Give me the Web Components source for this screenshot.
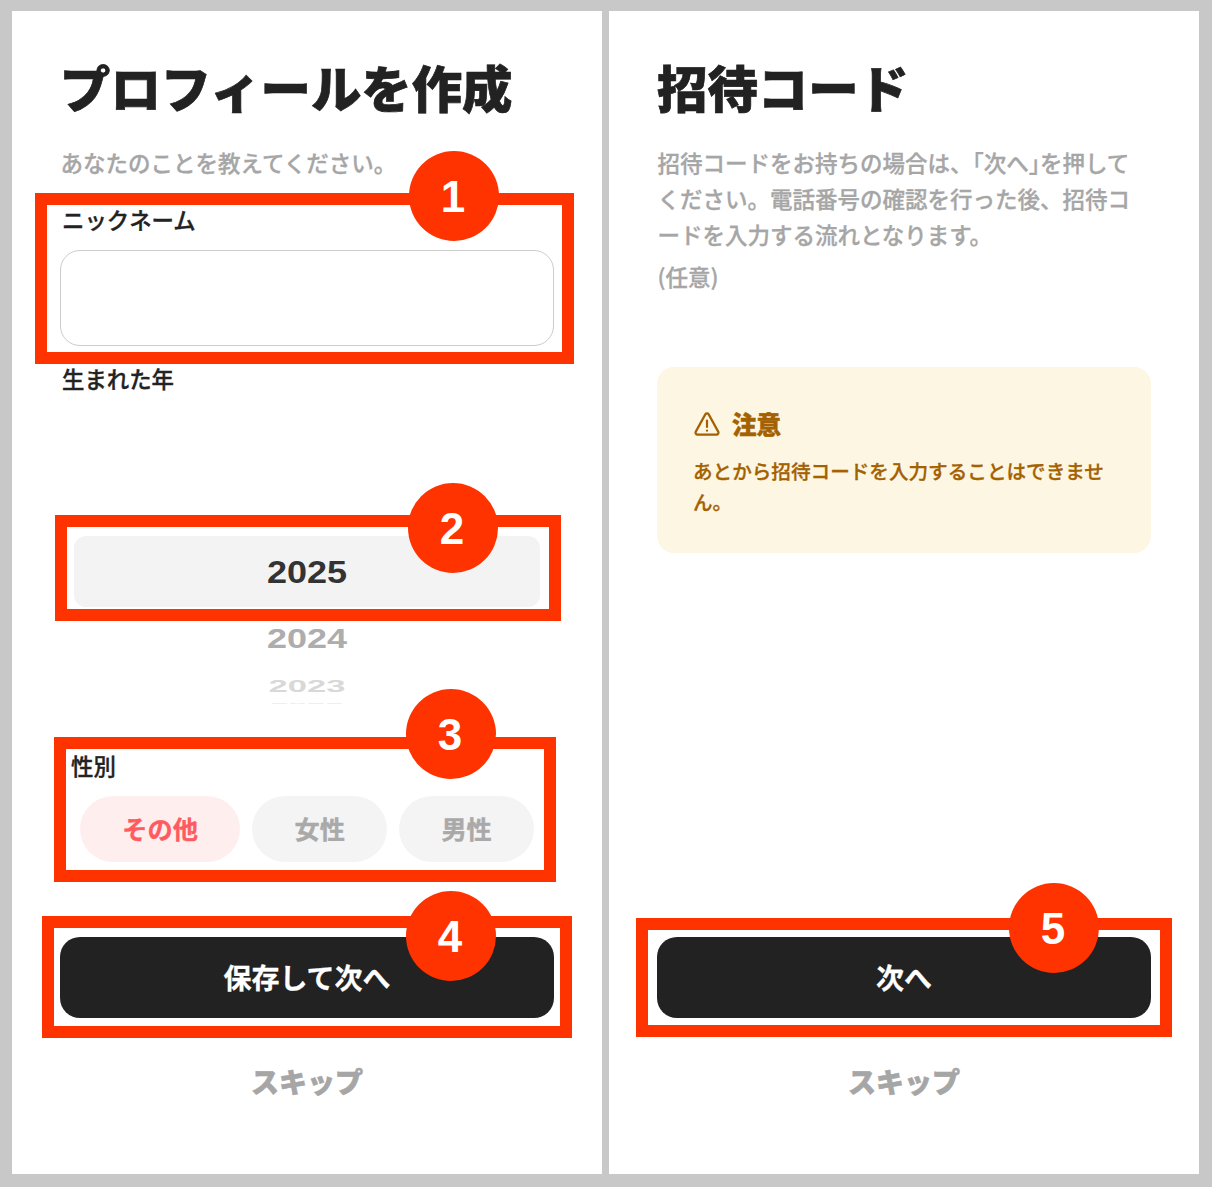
<!DOCTYPE html>
<html lang="ja">
<head>
<meta charset="utf-8">
<title>Onboarding</title>
<style>
    html, body { margin: 0; padding: 0; background: #c8c8c8; }
    body {
        font-family: "Noto Sans CJK JP", "Noto Sans", sans-serif;
        color: #222;
    }
</style>
</head>
<body>
<mock-board>
    <phone-screen heading="プロフィールを作成" action="保存して次へ">
        <screen-text>あなたのことを教えてください。</screen-text>
        <field-label style="margin-top:24px">ニックネーム</field-label>
        <text-box></text-box>
        <field-label style="margin-top:17px">生まれた年</field-label>
        <year-wheel></year-wheel>
        <field-label style="margin:45px 0 0 9px">性別</field-label>
        <gender-chips></gender-chips>
    </phone-screen>

    <phone-screen heading="招待コード" action="次へ">
        <screen-text>招待コードをお持ちの場合は、「次へ<span style="letter-spacing:-.5em">」</span>を押して<br>ください。電話番号の確認を行った後、招待コ<br>ードを入力する流れとなります。</screen-text>
        <screen-text class="optional">(任意)</screen-text>
        <notice-card heading="注意">あとから招待コードを入力することはできませ<br>ん。</notice-card>
    </phone-screen>

    <call-out n="1" box="35,193,539,171" dot="454,196"></call-out>
    <call-out n="2" box="55,515,506,106" dot="453,528"></call-out>
    <call-out n="3" box="54,737,502,145" dot="451,734"></call-out>
    <call-out n="4" box="42,916,530,122" dot="451,936"></call-out>
    <call-out n="5" box="636,918,536,119" dot="1054,928"></call-out>
</mock-board>

<script>
class MockBoard extends HTMLElement {
    constructor() {
        super();
        this.attachShadow({ mode: "open" });
        this.shadowRoot.innerHTML = `
            <style>
                :host {
                    display: grid;
                    position: relative;
                    grid-template-columns: 590px 590px;
                    column-gap: 7px;
                    box-sizing: border-box;
                    width: 1212px;
                    height: 1187px;
                    padding: 11px 13px 13px 12px;
                    overflow: hidden;
                }
            </style>
            <slot></slot>
        `;
    }
}

class PhoneScreen extends HTMLElement {
    constructor() {
        super();
        this.attachShadow({ mode: "open" });
    }

    connectedCallback() {
        this.shadowRoot.innerHTML = `
            <style>
                :host {
                    display: flex;
                    flex-direction: column;
                    box-sizing: border-box;
                    padding: 46px 48px 73.5px;
                    background: #fff;
                    min-width: 0;
                }
                h1 {
                    margin: 0 0 27px;
                    font-size: 50.4px;
                    line-height: 60px;
                    font-weight: 900;
                    color: #222;
                    white-space: nowrap;
                    -webkit-text-stroke: .7px #222;
                }
                .content { display: flex; flex-direction: column; flex: 1; }
                button {
                    display: block;
                    width: 100%;
                    height: 81px;
                    margin: 0;
                    padding: 0 0 2px;
                    border: 0;
                    border-radius: 20px;
                    background: #222;
                    color: #fff;
                    font: 700 28px/1 "Noto Sans CJK JP", sans-serif;
                    -webkit-text-stroke: .3px #fff;
                }
                .skip {
                    margin-top: 42.5px;
                    text-align: center;
                    font-size: 28px;
                    line-height: 40px;
                    font-weight: 900;
                    color: #a6a6a6;
                    -webkit-text-stroke: .6px #a6a6a6;
                }
            </style>
            <h1>${this.getAttribute("heading")}</h1>
            <div class="content"><slot></slot></div>
            <button type="button">${this.getAttribute("action")}</button>
            <div class="skip">スキップ</div>
        `;
    }
}

class ScreenText extends HTMLElement {
    constructor() {
        super();
        this.attachShadow({ mode: "open" });
        this.shadowRoot.innerHTML = `
            <style>
                :host {
                    display: block;
                    padding-left: .5px;
                    font-size: 22.5px;
                    line-height: 36px;
                    font-weight: 500;
                    color: #a6a6a6;
                    white-space: nowrap;
                    -webkit-text-stroke: .3px #a6a6a6;
                }
                :host(.optional) { margin-top: 6px; }
            </style>
            <slot></slot>
        `;
    }
}

class FieldLabel extends HTMLElement {
    constructor() {
        super();
        this.attachShadow({ mode: "open" });
        this.shadowRoot.innerHTML = `
            <style>
                :host {
                    display: block;
                    padding-left: 2px;
                    font-size: 22.4px;
                    line-height: 30px;
                    font-weight: 500;
                    color: #222;
                    -webkit-text-stroke: .35px #222;
                }
            </style>
            <slot></slot>
        `;
    }
}

class TextBox extends HTMLElement {
    constructor() {
        super();
        this.attachShadow({ mode: "open" });
        this.shadowRoot.innerHTML = `
            <style>
                :host { display: block; margin-top: 16px; }
                input {
                    display: block;
                    box-sizing: border-box;
                    width: 100%;
                    height: 96px;
                    border: 1px solid #ccc;
                    border-radius: 20px;
                    background: #fff;
                    outline: none;
                }
            </style>
            <input type="text" aria-label="ニックネーム">
        `;
    }
}

class YearWheel extends HTMLElement {
    constructor() {
        super();
        this.attachShadow({ mode: "open" });
        this.shadowRoot.innerHTML = `
            <style>
                :host {
                    display: block;
                    height: 312px;
                    box-sizing: border-box;
                    padding: 143px 14px 0;
                }
                div {
                    display: flex;
                    align-items: center;
                    justify-content: center;
                    font: 700 36px/1 "Liberation Sans", sans-serif;
                }
                span { display: block; }
                .current {
                    height: 71px;
                    border-radius: 12px;
                    background: #f3f3f3;
                    color: #333;
                }
                .current span { transform: scaleY(.89); }
                .near { height: 62px; color: #adadad; }
                .near span { transform: translateY(1px) scaleY(.78); }
                .far { height: 30px; color: #d8d8d8; }
                .far span { transform: translateY(2px) scale(.96, .46); }
                .farther { height: 8px; color: #ececec; }
                .farther span { transform: scale(.92, .07); }
            </style>
            <div class="current"><span>2025</span></div>
            <div class="near"><span>2024</span></div>
            <div class="far"><span>2023</span></div>
            <div class="farther"><span>2022</span></div>
        `;
    }
}

class GenderChips extends HTMLElement {
    constructor() {
        super();
        this.attachShadow({ mode: "open" });
        this.shadowRoot.innerHTML = `
            <style>
                :host {
                    display: flex;
                    gap: 12px;
                    margin: 16px 0 0 20px;
                }
                span {
                    display: flex;
                    align-items: center;
                    box-sizing: border-box;
                    height: 66px;
                    padding: 0 42.3px 2px;
                    border-radius: 33px;
                    background: #f4f4f4;
                    color: #a9a9a9;
                    font-size: 25.2px;
                    font-weight: 700;
                    white-space: nowrap;
                    -webkit-text-stroke: .4px currentColor;
                }
                .on { background: #ffeeee; color: #ff5a5f; }
            </style>
            <span class="on">その他</span>
            <span>女性</span>
            <span>男性</span>
        `;
    }
}

class NoticeCard extends HTMLElement {
    constructor() {
        super();
        this.attachShadow({ mode: "open" });
    }

    connectedCallback() {
        this.shadowRoot.innerHTML = `
            <style>
                :host {
                    display: block;
                    box-sizing: border-box;
                    height: 186px;
                    margin-top: 73px;
                    padding: 39px 36px 0;
                    border-radius: 17px;
                    background: #fdf6e3;
                    color: #a36100;
                }
                .head {
                    display: flex;
                    align-items: center;
                    gap: 12px;
                    height: 34px;
                    font-size: 24.5px;
                    font-weight: 900;
                }
                .head span { -webkit-text-stroke: .5px #a36100; }
                svg { display: block; width: 26px; height: 26px; flex: none; margin: 2px 0 0 1px; }
                .body {
                    margin-top: 15px;
                    font-size: 19.6px;
                    line-height: 31px;
                    font-weight: 500;
                    white-space: nowrap;
                    -webkit-text-stroke: .3px #a36100;
                }
            </style>
            <div class="head">
                <svg viewBox="0 0 26 26" fill="none" stroke="currentColor" stroke-width="2.2" stroke-linecap="round" stroke-linejoin="round">
                    <path d="M11.3 3.4 1.8 20.6A2 2 0 0 0 3.5 23.6h19a2 2 0 0 0 1.7-3L14.7 3.4a2 2 0 0 0-3.4 0Z"/>
                    <path d="M13 9.5v6.5"/>
                    <path d="M13 19.6v.1"/>
                </svg>
                <span>${this.getAttribute("heading")}</span>
            </div>
            <div class="body"><slot></slot></div>
        `;
    }
}

// annotation drawn over the screenshot: a frame and its numbered dot, in page coordinates
class CallOut extends HTMLElement {
    constructor() {
        super();
        this.attachShadow({ mode: "open" });
    }

    connectedCallback() {
        const [x, y, w, h] = this.getAttribute("box").split(",").map(Number);
        const [cx, cy] = this.getAttribute("dot").split(",").map(Number);
        this.shadowRoot.innerHTML = `
            <style>
                :host { display: contents; }
                .frame {
                    position: absolute;
                    left: ${x}px;
                    top: ${y}px;
                    width: ${w}px;
                    height: ${h}px;
                    box-sizing: border-box;
                    border: 12px solid #ff3300;
                }
                .dot {
                    position: absolute;
                    left: ${cx - 45}px;
                    top: ${cy - 45}px;
                    width: 90px;
                    height: 90px;
                    box-sizing: border-box;
                    padding: 2px 2px 0 0;
                    display: flex;
                    align-items: center;
                    justify-content: center;
                    border-radius: 50%;
                    background: #ff3300;
                    color: #fff;
                    font: 700 44px/1 "Liberation Sans", sans-serif;
                }
            </style>
            <div class="frame"></div>
            <div class="dot">${this.getAttribute("n")}</div>
        `;
    }
}

customElements.define("mock-board", MockBoard);
customElements.define("phone-screen", PhoneScreen);
customElements.define("screen-text", ScreenText);
customElements.define("field-label", FieldLabel);
customElements.define("text-box", TextBox);
customElements.define("year-wheel", YearWheel);
customElements.define("gender-chips", GenderChips);
customElements.define("notice-card", NoticeCard);
customElements.define("call-out", CallOut);
</script>
</body>
</html>
